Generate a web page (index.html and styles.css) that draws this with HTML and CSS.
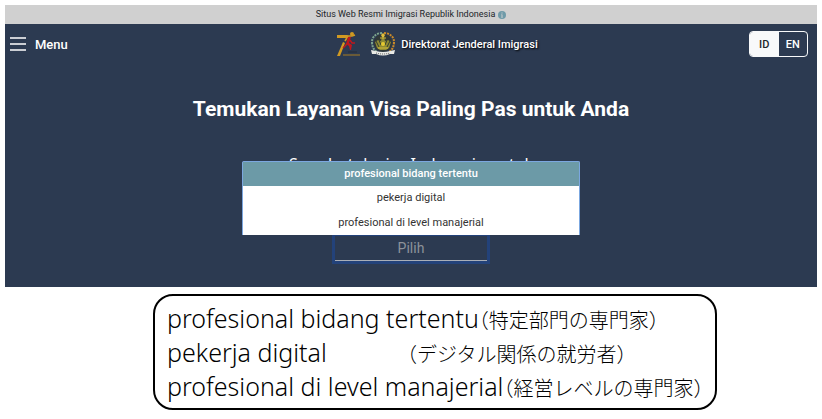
FILE: index.html
```
<!DOCTYPE html>
<html lang="id">
<head>
	<meta charset="UTF-8">
	<meta name="viewport" content="width=device-width, initial-scale=1">
	<title>Direktorat Jenderal Imigrasi</title>
	<link rel="stylesheet" href="styles.css">
</head>
<body>
	<div class="site">
		<div class="topbar">
			<span>Situs Web Resmi Imigrasi Republik Indonesia</span>
			<svg class="info" viewBox="0 0 16 16" aria-hidden="true">
				<circle cx="8" cy="8" r="8" fill="#6e9aa8"/>
				<path d="M7 3h2v2H7zM6 7h3v5h1v1H6v-1h1V8H6z" fill="#d0d0d0"/>
			</svg>
		</div>
		<header class="header">
			<button type="button" class="menuBtn">
				<svg class="bars" viewBox="0 0 16 14" aria-hidden="true">
					<path d="M0 1h16M0 7h16M0 13h16" stroke="#fff" stroke-width="1.7"/>
				</svg>
				<span>Menu</span>
			</button>
			<a href="#" class="brand">
				<svg class="anniv" viewBox="0 0 24 24" aria-hidden="true">
					<path d="M1 3h11l-1 3H1z" fill="#d19a22"/>
					<path d="M7 10l2 1-5 13H1z" fill="#d19a22"/>
					<circle cx="16" cy="2" r="2" fill="#d19a22"/>
					<path d="M9 9l3-5h4l3-1" fill="none" stroke="#d19a22" stroke-width="1.6"/>
					<path d="M12 5l3 0-2 6 3 2-1 5h-1l-1-4-3-2z" fill="#be171d"/>
					<path d="M7 16l4-4M14 8l2 3h3" fill="none" stroke="#be171d" stroke-width="1.5"/>
					<path d="M7 23h17" stroke="#a77a20"/>
					<path d="M12 20h9" stroke="#252b38"/>
				</svg>
				<svg class="emblem" viewBox="0 0 26 24" aria-hidden="true">
					<circle cx="13" cy="11" r="9" fill="#303837"/>
					<path d="M12 1C6 1 2 5 2 10s2 8 5 10" fill="none" stroke="#7da58c" stroke-width="2" stroke-dasharray="2 1"/>
					<path d="M14 1c6 0 10 4 10 9s-2 8-5 10" fill="none" stroke="#c98a28" stroke-width="2" stroke-dasharray="2 1"/>
					<path d="M11 3l2-2 2 2-1 2h-2z" fill="#e0bf3c"/>
					<path d="M12 5h2l1 4 3-1 3 2-2 6-3 2h-6l-3-2-2-6 3-2 3 1z" fill="#8f8a32"/>
					<path d="M6 9l3 6M20 9l-3 6M9 8l2 5M17 8l-2 5" stroke="#343f33"/>
					<circle cx="13" cy="12" r="2" fill="#e5c931"/>
					<path d="M8 16h10M10 6h6" stroke="#d5bd36"/>
					<path d="M1 18l5 1q7 2 14 0l5-1-1 4-4 0q-7 3-14 0l-4 0z" fill="#e9e9e5"/>
					<path d="M6 21q7 2 14 0" fill="none" stroke="#555" stroke-dasharray="1 1"/>
				</svg>
				<span>Direktorat Jenderal Imigrasi</span>
			</a>
			<div class="lang">
				<button type="button" class="cur">ID</button>
				<button type="button">EN</button>
			</div>
		</header>
		<main class="hero">
			<h1>Temukan Layanan Visa Paling Pas untuk Anda</h1>
			<div class="picker">
				<label for="purpose">Saya butuh visa Indonesia untuk</label>
				<select id="purpose">
					<option>Pilih</option>
				</select>
				<ul class="options">
					<li><button type="button" class="cur">profesional bidang tertentu</button></li>
					<li><button type="button">pekerja digital</button></li>
					<li><button type="button">profesional di level manajerial</button></li>
				</ul>
			</div>
		</main>
	</div>
	<div class="notes">
		<p>profesional bidang tertentu<span lang="ja">（特定部門の専門家）</span></p>
		<p><span class="term">pekerja digital</span><span lang="ja">（デジタル関係の就労者）</span></p>
		<p>profesional di level manajerial<span lang="ja">（経営レベルの専門家）</span></p>
	</div>
</body>
</html>
```
FILE: styles.css
```
*{
	margin: 0;
	padding: 0;
	box-sizing: border-box;
}
body{
	padding: 5px;
	background-color: #fff;
	font-family: Roboto, "Noto Sans CJK JP", sans-serif;
	color: #212529;
}
button{
	border: none;
	background: none;
	font-family: inherit;
	color: inherit;
	cursor: pointer;
}
.site{
	background-color: #2c3a51;
}
.topbar{
	display: flex;
	align-items: center;
	justify-content: center;
	gap: 3px;
	height: 19px;
	background-color: #d0d0d0;
	font-size: 9px;
	line-height: 19px;
}
.info{
	width: 8px;
	height: 8px;
}
.header{
	display: grid;
	grid-template-columns: 1fr auto 1fr;
	align-items: center;
	height: 40px;
	padding: 0 9px 0 5px;
	color: #fff;
}
.menuBtn{
	display: flex;
	align-items: center;
	gap: 9px;
	font-size: 13px;
	font-weight: 500;
}
.bars{
	width: 16px;
	height: 14px;
}
.brand{
	display: flex;
	align-items: center;
	padding-left: 56px;
	color: #fff;
	font-size: 11px;
	font-weight: 500;
	text-decoration: none;
	text-shadow: 1px 1px 2px #000;
}
.anniv{
	width: 24px;
	height: 24px;
	margin-right: 10px;
}
.emblem{
	width: 26px;
	height: 24px;
	margin-right: 5px;
}
.lang{
	display: flex;
	justify-self: end;
	width: 59px;
	height: 26px;
	border: 1px solid #f8f9fa;
	border-radius: 4px;
	overflow: hidden;
}
.lang button{
	flex: 1;
	font-size: 11px;
	font-weight: 500;
}
.lang button.cur{
	background-color: #f8f9fa;
	color: #212529;
}
.hero{
	display: flex;
	flex-direction: column;
	align-items: center;
	padding: 29px 16px 26px;
	color: #fff;
}
.hero h1{
	font-size: 21px;
	line-height: 32px;
	font-weight: 700;
	text-align: center;
}
.picker{
	position: relative;
	display: flex;
	flex-direction: column;
	align-items: center;
	gap: 60px;
	width: 338px;
	max-width: 100%;
	margin-top: 27px;
}
.picker label{
	font-family: "Noto Sans", sans-serif;
	font-size: 16px;
	line-height: 24px;
}
.picker select{
	width: 152px;
	height: 25px;
	border: none;
	border-bottom: 1px solid #a9aeb7;
	outline: 3px solid #23427a;
	appearance: none;
	background-color: transparent;
	color: #8d929a;
	font-family: inherit;
	font-size: 14px;
	text-align: center;
	text-align-last: center;
}
.options{
	position: absolute;
	top: 9px;
	left: 0;
	width: 100%;
	border: 1px solid #7ba7e0;
	border-bottom: none;
	border-radius: 2px 2px 0 0;
	background-color: #fff;
	list-style: none;
	color: #333;
}
.options button{
	display: block;
	width: 100%;
	height: 24px;
	font-size: 11px;
	line-height: 24px;
}
.options li:last-child button{
	height: 25px;
}
.options button.cur{
	background-color: #6c9aa7;
	color: #fff;
	font-weight: 500;
}
.notes{
	width: fit-content;
	max-width: 100%;
	margin: 7px 0 0 148px;
	padding: 5px 12px;
	border: 2px solid #000;
	border-radius: 20px;
	color: #000;
	font-family: "Noto Sans", sans-serif;
	font-size: 25px;
	font-weight: 300;
	line-height: 34px;
}
.notes span[lang]{
	font-family: "Noto Sans CJK JP", sans-serif;
	font-size: 20px;
	line-height: 20px;
	font-feature-settings: "halt";
}
.notes .term{
	display: inline-block;
	min-width: 240px;
}
```
